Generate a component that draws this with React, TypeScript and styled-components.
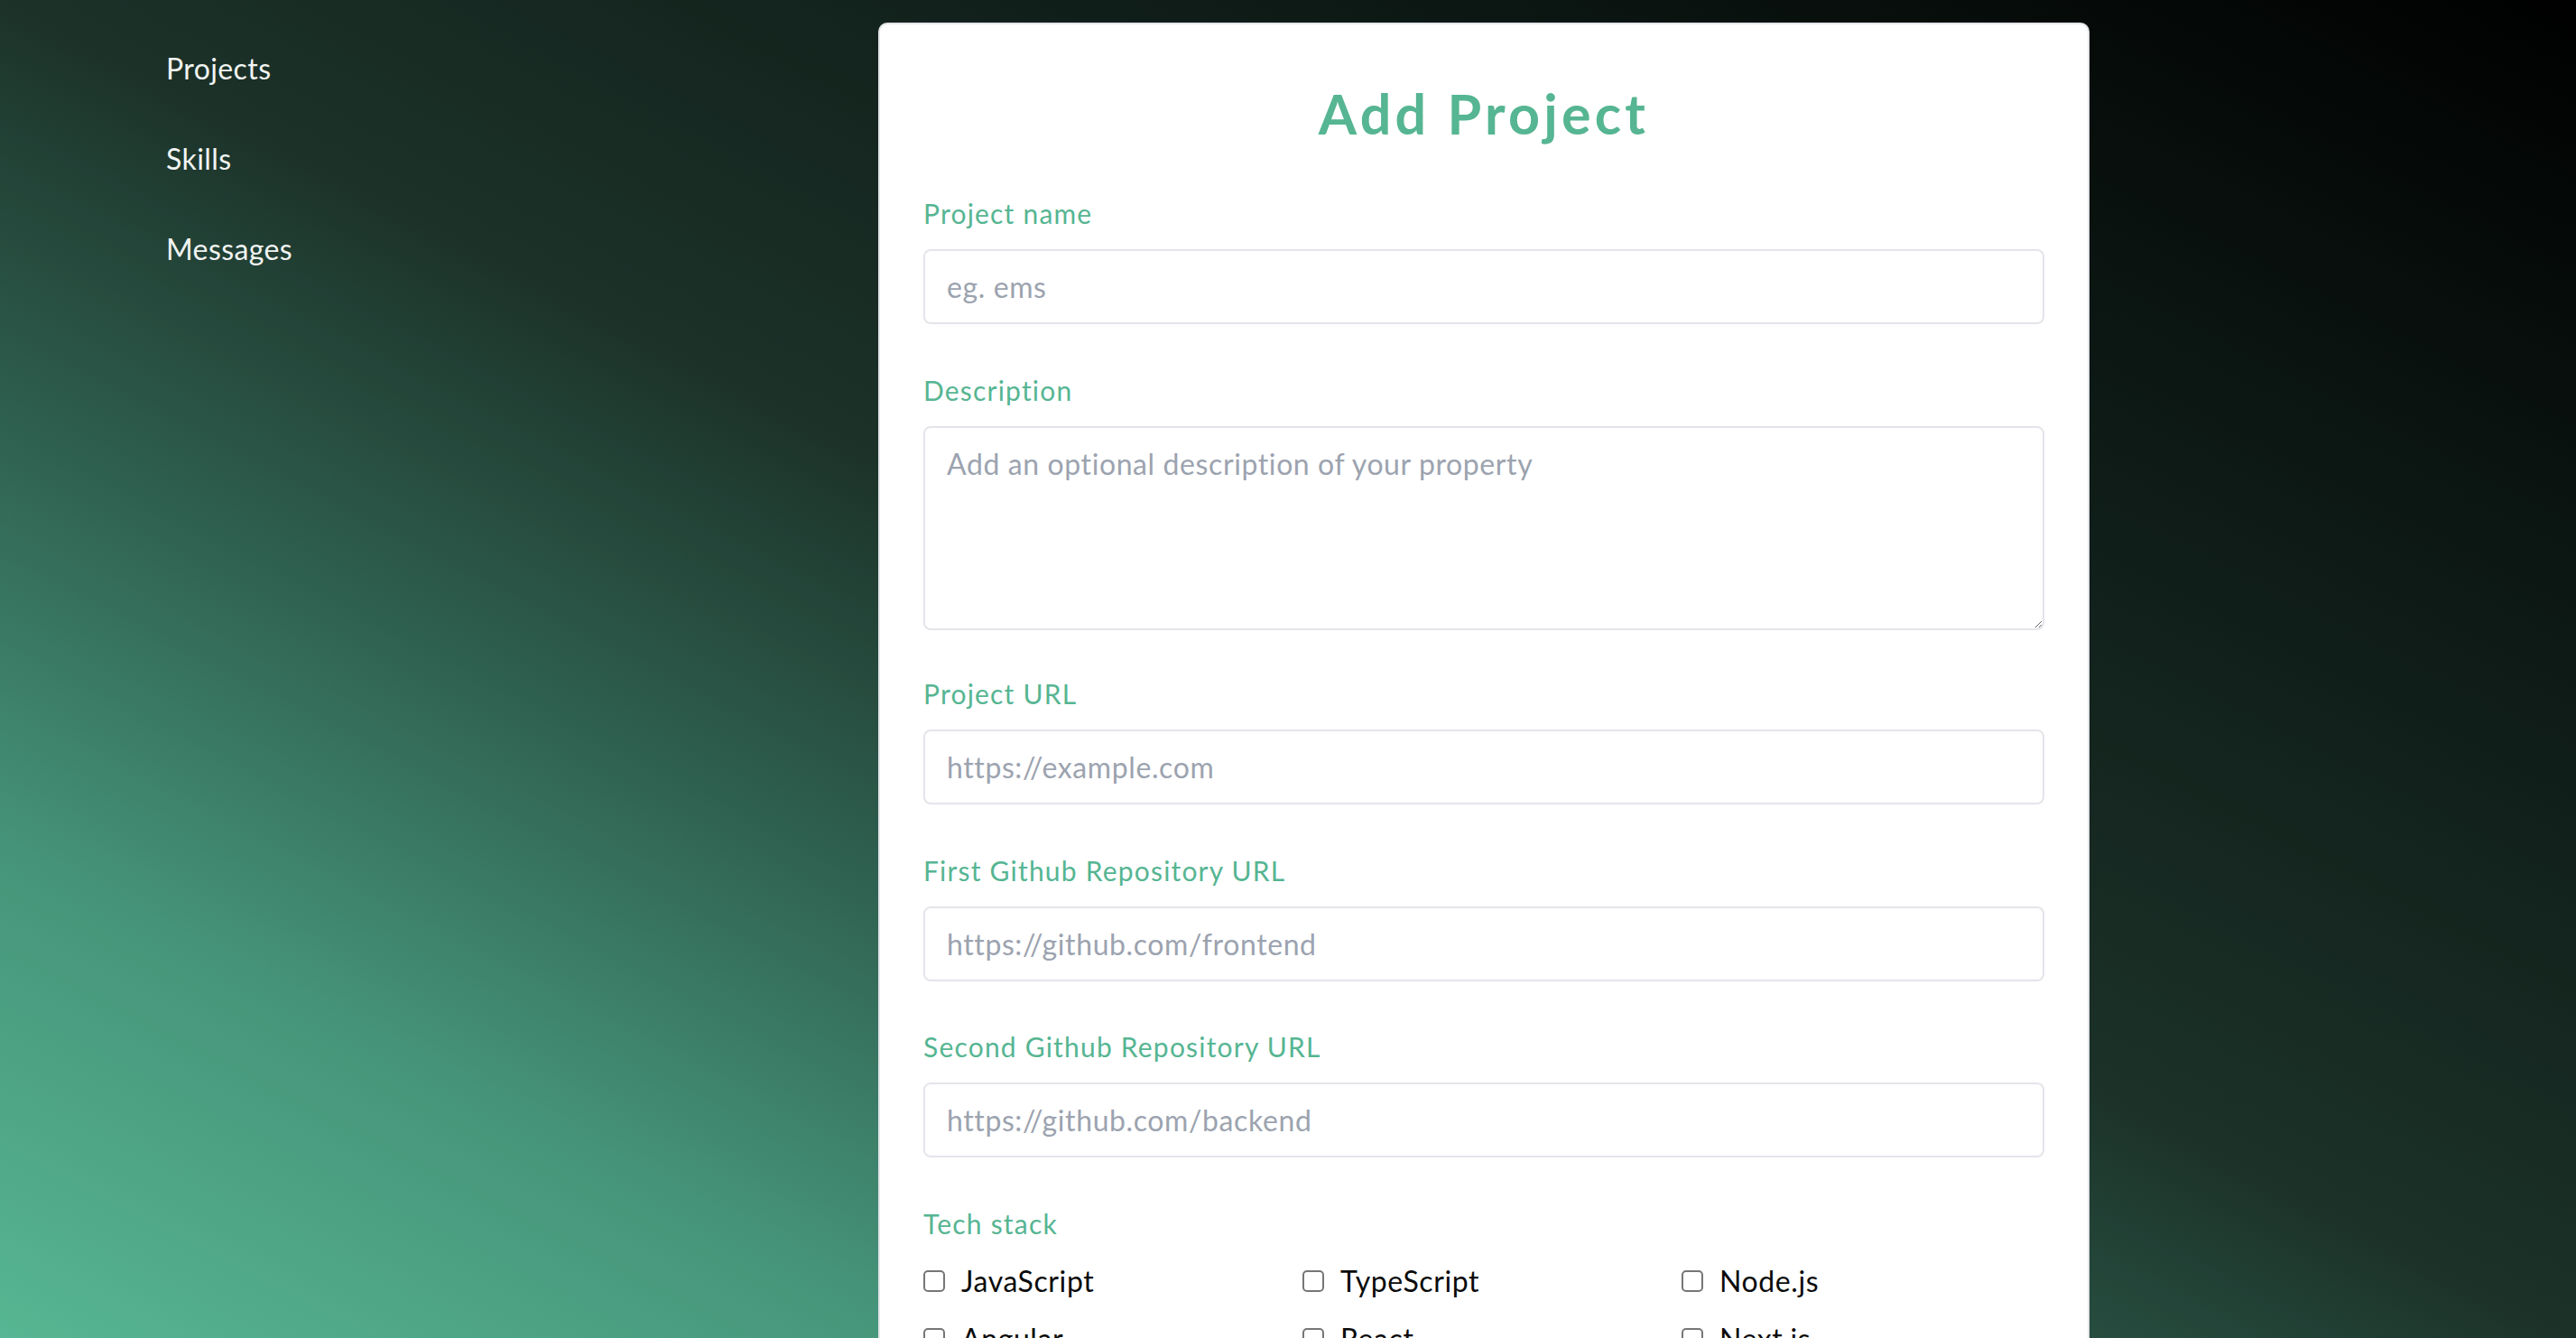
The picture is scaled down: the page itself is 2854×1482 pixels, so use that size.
import React from "react";
import styled, { createGlobalStyle } from "styled-components";

const GlobalStyle = createGlobalStyle`
  html, body {
    margin: 0;
    padding: 0;
    height: 100%;
    overflow: hidden;
  }
  body {
    font-family: Lato, "Liberation Sans", sans-serif;
  }
  * { box-sizing: border-box; }
`;

const Page = styled.div`
  display: flex;
  width: 100vw;
  height: 100vh;
  overflow: hidden;
  background: linear-gradient(
    to top right,
    #57b693 0%,
    #46957a 18%,
    #2f6150 34%,
    #1c3229 50%,
    #0d1915 76%,
    #000000 100%
  );
`;

const Sidebar = styled.nav`
  flex: 0 0 434px;
  display: flex;
  flex-direction: column;
  gap: 60px;
  padding: 56px 0 0 184px;
`;

const NavLink = styled.a`
  font-size: 32px;
  line-height: 40px;
  letter-spacing: 0.4px;
  color: #f1f4f2;
  text-decoration: none;
  cursor: pointer;
`;

const Main = styled.main`
  flex: 1;
  display: flex;
  justify-content: center;
  align-items: flex-start;
  padding-top: 25px;
`;

const Card = styled.form`
  width: 1342px;
  background: #ffffff;
  border: 2px solid #e3e5e9;
  border-radius: 10px;
  padding: 70px 48px 80px;
  display: flex;
  flex-direction: column;
`;

const Title = styled.h1`
  margin: 0 0 63px;
  font-size: 61px;
  line-height: 58px;
  font-weight: 700;
  letter-spacing: 4.2px;
  text-align: center;
  color: #56b592;
`;

const Field = styled.div<{ $after?: number }>`
  display: flex;
  flex-direction: column;
  margin-bottom: ${(p) => (p.$after ?? 55)}px;
`;

const Label = styled.label`
  font-size: 30px;
  line-height: 36px;
  letter-spacing: 1.2px;
  color: #56b592;
  margin-bottom: 22px;
`;

const TechLabel = styled(Label)`
  margin-bottom: 26px;
`;

const inputBase = `
  width: 100%;
  border: 2px solid #e4e5ea;
  border-radius: 8px;
  background: #ffffff;
  font-family: Lato, "Liberation Sans", sans-serif;
  font-size: 32px;
  letter-spacing: 0.6px;
  color: #111827;
  outline: none;
  &::placeholder { color: #9ca3af; }
`;

const TextInput = styled.input`
  ${inputBase}
  height: 83px;
  padding: 0 24px;
`;

const TextArea = styled.textarea`
  ${inputBase}
  display: block;
  height: 226px;
  padding: 16px 24px;
  line-height: 48px;
  resize: vertical;
`;

const CheckGrid = styled.div`
  display: grid;
  grid-template-columns: repeat(3, 1fr);
  column-gap: 18px;
  row-gap: 24px;
`;

const CheckItem = styled.label`
  display: flex;
  align-items: center;
  gap: 18px;
  font-size: 32px;
  line-height: 40px;
  letter-spacing: 0.6px;
  color: #0b0b0b;
`;

const CheckBox = styled.input`
  appearance: none;
  -webkit-appearance: none;
  margin: 0;
  width: 24px;
  height: 24px;
  flex: 0 0 24px;
  border: 2px solid #767676;
  border-radius: 5px;
  background: #ffffff;
`;

const techs = [
  "JavaScript",
  "TypeScript",
  "Node.js",
  "Angular",
  "React",
  "Next.js",
  "Vue.js",
  "Express",
  "MongoDB",
];

export default function App() {
  return (
    <>
      <GlobalStyle />
      <Page>
        <Sidebar>
          <NavLink>Projects</NavLink>
          <NavLink>Skills</NavLink>
          <NavLink>Messages</NavLink>
        </Sidebar>
        <Main>
          <Card onSubmit={(e) => e.preventDefault()}>
            <Title>Add Project</Title>
            <Field>
              <Label>Project name</Label>
              <TextInput placeholder="eg. ems" />
            </Field>
            <Field $after={52}>
              <Label>Description</Label>
              <TextArea placeholder="Add an optional description of your property" />
            </Field>
            <Field>
              <Label>Project URL</Label>
              <TextInput placeholder="https://example.com" />
            </Field>
            <Field $after={54}>
              <Label>First Github Repository URL</Label>
              <TextInput placeholder="https://github.com/frontend" />
            </Field>
            <Field>
              <Label>Second Github Repository URL</Label>
              <TextInput placeholder="https://github.com/backend" />
            </Field>
            <Field>
              <TechLabel>Tech stack</TechLabel>
              <CheckGrid>
                {techs.map((t) => (
                  <CheckItem key={t}>
                    <CheckBox type="checkbox" />
                    {t}
                  </CheckItem>
                ))}
              </CheckGrid>
            </Field>
          </Card>
        </Main>
      </Page>
    </>
  );
}
